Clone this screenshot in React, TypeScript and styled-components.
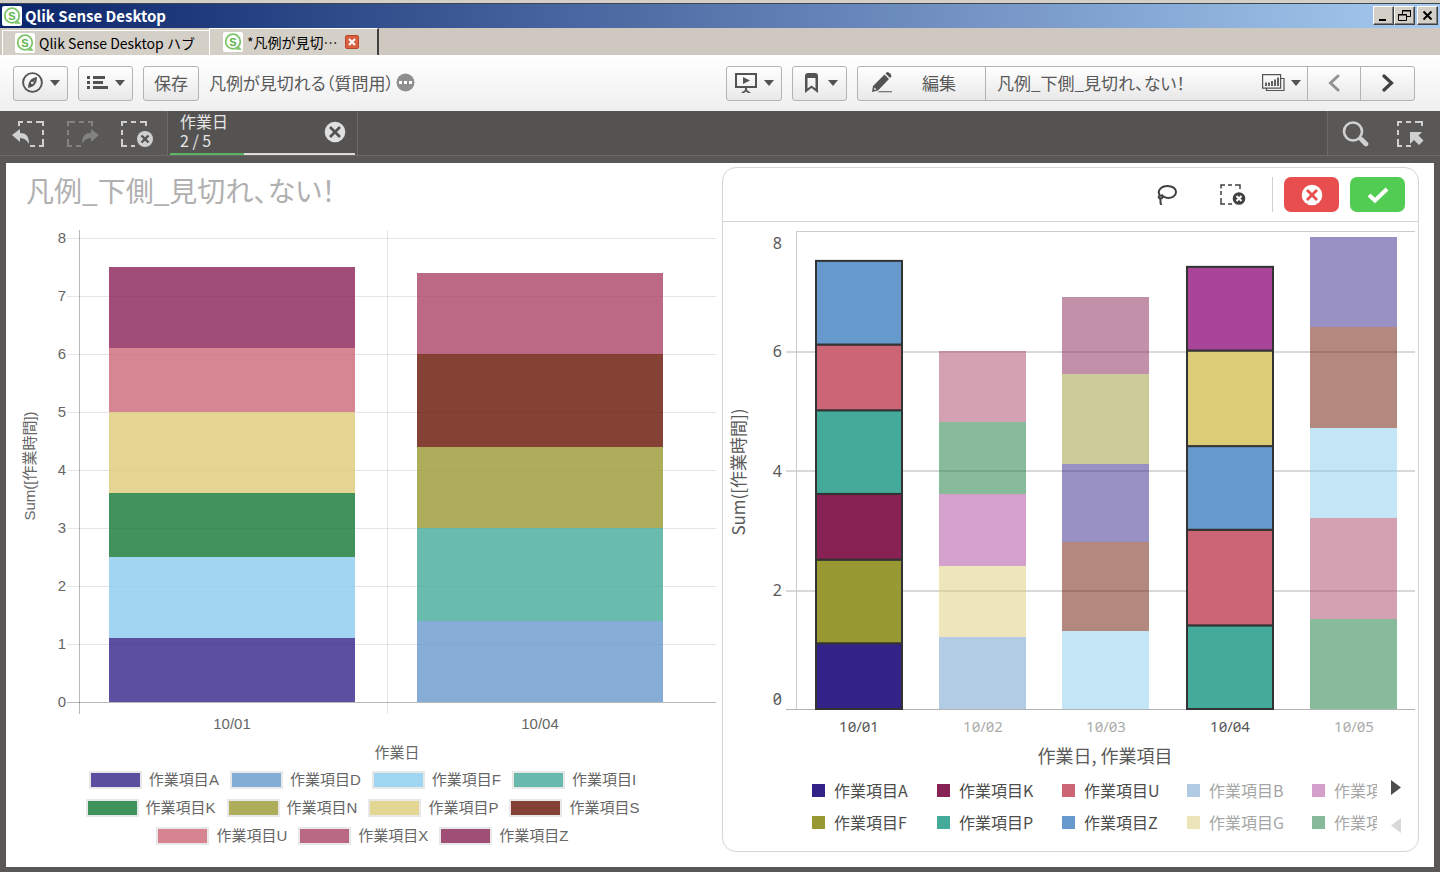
import React from 'react';
import styled, { createGlobalStyle, css } from 'styled-components';

const jp = '"Noto Sans CJK JP", "Noto Sans", sans-serif';
const mixed = '"Liberation Sans", "Noto Sans CJK JP", sans-serif';
const numeric = '"Noto Sans", "Noto Sans CJK JP", sans-serif';

const GlobalStyle = createGlobalStyle`
  * { box-sizing: border-box; }
  body {
    margin: 0;
    background: #595857;
    font-family: ${jp};
    color: #595959;
  }
  button { font: inherit; color: inherit; padding: 0; margin: 0; cursor: pointer; }
  h1, h2, p, ul { margin: 0; padding: 0; font-weight: 400; }
  ul { list-style: none; }
  svg { display: block; flex: none; }
`;

const palette = {
  indigo: '#332288',
  blue: '#6699cc',
  cyan: '#88ccee',
  teal: '#44aa99',
  green: '#117733',
  olive: '#999933',
  sand: '#ddcc77',
  brown: '#661100',
  rose: '#cc6677',
  raspberry: '#aa4466',
  wine: '#882255',
  purple: '#aa4499',
};

/* ---------- window frame ---------- */

const Page = styled.div`
  display: flex;
  flex-direction: column;
  min-height: 100vh;
`;

const TitleBar = styled.header`
  display: flex;
  align-items: center;
  gap: 3px;
  height: 28px;
  padding: 1px 2px 1px;
  border-top: 3px solid #d4d0c8;
  background: linear-gradient(90deg, #0a246a, #a6caf0);
  box-shadow: inset 0 1px 0 #3c4650;
`;

const WindowTitle = styled.h1`
  flex: 1;
  font-size: 15px;
  line-height: 20px;
  font-weight: 700;
  color: #fff;
`;

const WindowButtons = styled.div`
  display: flex;
`;

const WindowButton = styled.button<{ $apart?: boolean }>`
  display: grid;
  place-items: center;
  width: 21px;
  height: 19px;
  margin-left: ${(p) => (p.$apart ? 2 : 0)}px;
  background: #d4d0c8;
  color: #000;
  border: 1px solid;
  border-color: #fff #404040 #404040 #fff;
  box-shadow: inset -1px -1px 0 #808080;
`;

const TabBar = styled.div`
  display: flex;
  align-items: flex-end;
  height: 28px;
  padding-left: 2px;
  background: #cec8c1;
  border-bottom: 1px solid #fff;
`;

const Tab = styled.button<{ $active?: boolean }>`
  display: flex;
  align-items: center;
  gap: 4px;
  font-size: 14px;
  line-height: 20px;
  color: #000;
  background: #d4d0c8;
  border: 0 solid #fff;
  border-width: 1px 0 0 1px;
  ${(p) =>
    p.$active
      ? css`
          height: 27px;
          padding: 0 18px 0 13px;
          border-right: 2px solid #404040;
        `
      : css`
          height: 25px;
          padding: 0 14px 0 12px;
        `}
`;

const TabClose = styled.span`
  display: grid;
  place-items: center;
  width: 14px;
  height: 14px;
  margin-left: 4px;
  border-radius: 2px;
  background: #d9603f;
  border: 1px solid #b8442c;
`;

function AppLogo() {
  return (
    <svg width="20" height="20" viewBox="0 0 20 20" aria-hidden="true">
      <rect width="20" height="20" rx="2" fill="#fff" />
      <circle cx="10" cy="9.500" r="7.300" fill="none" stroke="#7cc46a" strokeWidth="1.800" />
      <path d="M14.500 14.500l2.500 2.500h-4" fill="none" stroke="#7cc46a" strokeWidth="1.600" />
      <text x="10" y="13.500" textAnchor="middle" fontFamily="Liberation Sans, sans-serif" fontSize="11" fontWeight="700" fill="#5cb548">
        S
      </text>
    </svg>
  );
}

/* ---------- toolbar ---------- */

const Toolbar = styled.nav`
  display: flex;
  align-items: center;
  gap: 10px;
  height: 55px;
  padding: 0 25px 0 13px;
  background: linear-gradient(#fff, #efefef);
  font-size: 17px;
  line-height: 24px;
`;

const ToolButton = styled.button<{ $width?: number }>`
  display: flex;
  align-items: center;
  justify-content: center;
  gap: 7px;
  width: ${(p) => p.$width ?? 55}px;
  height: 35px;
  padding-bottom: 2px;
  border: 1px solid #b3b3b3;
  border-radius: 3px;
  background: linear-gradient(#fff, #e8e8e8);
`;

const AppName = styled.p`
  display: flex;
  align-items: center;
  gap: 2px;
  flex: 1;
  min-width: 0;
  padding-bottom: 2px;
  white-space: nowrap;
  font-feature-settings: 'palt';
`;

const PlainButton = styled.button`
  display: grid;
  place-items: center;
  background: none;
  border: 0;
`;

const ButtonGroup = styled.div`
  display: flex;
  height: 35px;
  border: 1px solid #b3b3b3;
  border-radius: 3px;
  background: linear-gradient(#fff, #e8e8e8);
`;

const GroupButton = styled.button<{ $width: number; $faded?: boolean }>`
  display: flex;
  align-items: center;
  justify-content: center;
  width: ${(p) => p.$width}px;
  padding-bottom: 2px;
  background: none;
  border: 0;
  & + & { border-left: 1px solid #b3b3b3; }
  & > svg { opacity: ${(p) => (p.$faded ? 0.6 : 1)}; }
`;

const EditLabel = styled.span`
  flex: 1;
`;

const SheetLabel = styled.span`
  flex: 1;
  text-align: left;
  padding-left: 11px;
  font-feature-settings: 'palt';
`;

const IconSlot = styled.span<{ $before?: number; $after?: number }>`
  display: flex;
  align-items: center;
  gap: 6px;
  padding-left: ${(p) => p.$before ?? 0}px;
  padding-right: ${(p) => p.$after ?? 0}px;
`;

const Caret = () => (
  <svg width="10" height="6" viewBox="0 0 10 6" aria-hidden="true">
    <path d="M0 0h10l-5 6z" fill="#545352" />
  </svg>
);

/* ---------- selections bar ---------- */

const SelectionBar = styled.div`
  display: flex;
  height: 45px;
  background: #545352;
  border-bottom: 1px solid #6b6a69;
  color: #e6e6e6;
`;

const SelectionTools = styled.div<{ $side: 'left' | 'right' }>`
  display: flex;
  align-items: center;
  justify-content: space-between;
  background: #595857;
  ${(p) =>
    p.$side === 'left'
      ? css`
          width: 168px;
          padding: 2px 13px 0 12px;
          border-right: 1px solid #6b6a69;
        `
      : css`
          width: 113px;
          margin-left: auto;
          padding: 2px 16px 0 14px;
          border-left: 1px solid #6b6a69;
        `}
`;

const SelectionItem = styled.div`
  display: flex;
  align-items: center;
  justify-content: space-between;
  width: 190px;
  padding: 0 11px 2px 12px;
  border-right: 1px solid #6b6a69;
  background: linear-gradient(#5bb45f, #5bb45f) 2px 100% / 74px 2px no-repeat,
    linear-gradient(#dcdcdc, #dcdcdc) 2px 100% / 185px 2px no-repeat;
`;

const SelectionText = styled.p`
  font-size: 16px;
  line-height: 19px;
  padding-bottom: 3px;
`;

const SelectionCount = styled.span`
  display: block;
`;

/* ---------- sheet ---------- */

const Sheet = styled.main`
  display: grid;
  grid-template-columns: 716fr 697fr;
  align-items: start;
  margin: 7px 6px 6px;
  padding: 4px 15px 15px 0;
  background: #fff;
`;

const ChartPanel = styled.section``;

const PanelTitle = styled.h2`
  height: 57px;
  padding-left: 20px;
  font-size: 28px;
  line-height: 46px;
  color: #b0b0b0;
  font-feature-settings: 'palt';
`;

const Card = styled.section`
  border: 1px solid #d5d5d5;
  border-radius: 14px;
  overflow: hidden;
`;

const CardHeader = styled.div`
  display: flex;
  align-items: center;
  justify-content: flex-end;
  height: 54px;
  padding-right: 13px;
  border-bottom: 1px solid #d5d5d5;
`;

const HeaderTool = styled(PlainButton)`
  width: 66px;
  height: 35px;
`;

const Divider = styled.span`
  width: 1px;
  height: 35px;
  margin: 0 11px 0 6px;
  background: #d0d0d0;
`;

const ActionButton = styled.button<{ $tone: string }>`
  display: grid;
  place-items: center;
  width: 55px;
  height: 35px;
  border: 0;
  border-radius: 7px;
  background: ${(p) => p.$tone};
  & + & { margin-left: 11px; }
`;

const ChartSvg = styled.svg`
  width: 100%;
  height: auto;
`;

const WideLegend = styled.ul`
  display: flex;
  flex-wrap: wrap;
  justify-content: center;
  column-gap: 11px;
  padding: 1px 43px 0 40px;
  font-family: ${mixed};
  font-size: 15px;
  line-height: 28px;
  color: #666;
`;

const WideLegendItem = styled.li`
  display: flex;
  align-items: center;
  gap: 7px;
`;

const WideSwatch = styled.span<{ $color: string }>`
  width: 53px;
  height: 18px;
  border: 2px solid #e3e3e3;
  background: ${(p) => p.$color};
  opacity: 0.8;
`;

const PagedLegend = styled.div`
  display: flex;
  padding: 0 17px 13px 89px;
`;

const LegendColumns = styled.ul`
  flex: 1;
  min-width: 0;
  display: grid;
  grid-template-rows: 32px 32px;
  grid-auto-columns: 125px;
  grid-auto-flow: column;
  overflow: hidden;
  font-size: 16px;
  line-height: 32px;
  color: #4d4d4d;
`;

const SquareItem = styled.li<{ $faded: boolean }>`
  display: flex;
  align-items: center;
  gap: 9px;
  white-space: nowrap;
  opacity: ${(p) => (p.$faded ? 0.5 : 1)};
`;

const SquareSwatch = styled.span<{ $color: string }>`
  flex: none;
  width: 13px;
  height: 13px;
  background: ${(p) => p.$color};
`;

const Pager = styled.div`
  display: flex;
  flex-direction: column;
  justify-content: space-between;
  width: 24px;
  padding: 6px 0 5px 13px;
`;

/* ---------- data ---------- */

type Segment = [color: string, value: number];

const leftBars: { label: string; segments: Segment[] }[] = [
  {
    label: '10/01',
    segments: [
      [palette.indigo, 1.1], [palette.cyan, 1.4], [palette.green, 1.1],
      [palette.sand, 1.4], [palette.rose, 1.1], [palette.wine, 1.4],
    ],
  },
  {
    label: '10/04',
    segments: [
      [palette.blue, 1.4], [palette.teal, 1.6], [palette.olive, 1.4],
      [palette.brown, 1.6], [palette.raspberry, 1.4],
    ],
  },
];

const rightBars: { label: string; selected: boolean; segments: Segment[] }[] = [
  {
    label: '10/01', selected: true,
    segments: [
      [palette.indigo, 1.1], [palette.olive, 1.4], [palette.wine, 1.1],
      [palette.teal, 1.4], [palette.rose, 1.1], [palette.blue, 1.4],
    ],
  },
  {
    label: '10/02', selected: false,
    segments: [
      [palette.blue, 1.2], [palette.sand, 1.2], [palette.purple, 1.2],
      [palette.green, 1.2], [palette.raspberry, 1.2],
    ],
  },
  {
    label: '10/03', selected: false,
    segments: [
      [palette.cyan, 1.3], [palette.brown, 1.5], [palette.indigo, 1.3],
      [palette.olive, 1.5], [palette.wine, 1.3],
    ],
  },
  {
    label: '10/04', selected: true,
    segments: [
      [palette.teal, 1.4], [palette.rose, 1.6], [palette.blue, 1.4],
      [palette.sand, 1.6], [palette.purple, 1.4],
    ],
  },
  {
    label: '10/05', selected: false,
    segments: [
      [palette.green, 1.5], [palette.raspberry, 1.7], [palette.cyan, 1.5],
      [palette.brown, 1.7], [palette.indigo, 1.5],
    ],
  },
];

const leftLegend: [string, string][] = [
  ['A', palette.indigo], ['D', palette.blue], ['F', palette.cyan], ['I', palette.teal],
  ['K', palette.green], ['N', palette.olive], ['P', palette.sand], ['S', palette.brown],
  ['U', palette.rose], ['X', palette.raspberry], ['Z', palette.wine],
];

const rightLegend: [string, string, boolean][] = [
  ['A', palette.indigo, false], ['F', palette.olive, false],
  ['K', palette.wine, false], ['P', palette.teal, false],
  ['U', palette.rose, false], ['Z', palette.blue, false],
  ['B', palette.blue, true], ['G', palette.sand, true],
  ['L', palette.purple, true], ['Q', palette.green, true],
];

function stack(segments: Segment[]) {
  let base = 0;
  return segments.map(([color, value]) => {
    const from = base;
    base += value;
    return { color, from, to: base };
  });
}

/* ---------- charts ---------- */

function LeftChart() {
  const y = (v: number) => 478 - v * 58;
  const plot = { left: 73, right: 710, slot: 308, bar: 246 };
  return (
    <ChartSvg viewBox="0 0 716 541" role="img" aria-label="Sum([作業時間]) / 作業日" fontFamily={mixed} fontSize="15" fill="#666">
      {[0, 1, 2, 3, 4, 5, 6, 7, 8].map((v) => (
        <g key={v}>
          <rect x="61" y={y(v)} width={plot.right - 61} height="1" fill="#000" opacity={v === 0 ? 0.28 : 0.1} />
          <text x="60" y={y(v) + 5} textAnchor="end">{v}</text>
        </g>
      ))}
      <rect x={plot.left} y="6" width="1" height="484" fill="#000" opacity="0.28" />
      <rect x={plot.left + plot.slot} y="6" width="1" height="484" fill="#000" opacity="0.1" />
      {leftBars.map((bar, i) => {
        const x = plot.left + i * plot.slot + 30;
        return (
          <g key={bar.label}>
            {stack(bar.segments).map((s) => (
              <rect key={s.from} x={x} y={y(s.to)} width={plot.bar} height={y(s.from) - y(s.to)} fill={s.color} opacity="0.8" shapeRendering="crispEdges" />
            ))}
            <text x={x + plot.bar / 2} y="505" textAnchor="middle">{bar.label}</text>
          </g>
        );
      })}
      <text x="391" y="534" textAnchor="middle">作業日</text>
      <text transform="translate(29 242) rotate(-90)" textAnchor="middle">Sum([作業時間])</text>
    </ChartSvg>
  );
}

function RightChart() {
  const y = (v: number) => 487 - v * 59.75;
  return (
    <ChartSvg viewBox="0 0 695 552" role="img" aria-label="Sum([作業時間]) / 作業日, 作業項目" fontFamily={jp} fill="#595959">
      {[2, 4, 6].map((v) => (
        <rect key={v} x="63" y={Math.round(y(v))} width="629" height="2" fill="#d9d9d9" />
      ))}
      <rect x="73" y="9" width="619" height="1" fill="#ccc" />
      <rect x="73" y="9" width="1" height="479" fill="#ccc" />
      <g fontFamily={numeric} fontSize="16" textAnchor="end" style={{ fontFeatureSettings: "'zero'" }}>
        {[['8', 27], ['6', 135], ['4', 255], ['2', 374], ['0', 483]].map(([t, ty]) => (
          <text key={t} x="59" y={ty}>{t}</text>
        ))}
      </g>
      <rect x="63" y="487" width="629" height="1" fill="#b3b3b3" />
      {rightBars.map((bar, i) => {
        const x = 92 + Math.round(i * 123.7);
        return (
          <g key={bar.label}>
            {stack(bar.segments).map((s) => (
              <rect
                key={s.from}
                x={bar.selected ? x + 1 : x}
                y={y(s.to)}
                width={bar.selected ? 86 : 87}
                height={y(s.from) - y(s.to)}
                fill={s.color}
                fillOpacity={bar.selected ? 1 : 0.5}
                stroke={bar.selected ? '#333' : 'none'}
                strokeWidth="2"
                shapeRendering={bar.selected ? 'auto' : 'crispEdges'}
              />
            ))}
            <text
              x={x + 44}
              y="510"
              textAnchor="middle"
              fontFamily={numeric}
              fontSize="15"
              opacity={bar.selected ? 1 : 0.5}
              style={{ fontFeatureSettings: "'zero'" }}
            >
              {bar.label}
            </text>
          </g>
        );
      })}
      <text x="382" y="541" textAnchor="middle" fontSize="18">作業日, 作業項目</text>
      <text transform="translate(22 250) rotate(-90)" textAnchor="middle" fontSize="17">Sum([作業時間])</text>
    </ChartSvg>
  );
}

/* ---------- icons ---------- */

function StepBackIcon({ flip }: { flip?: boolean }) {
  return (
    <svg width="33" height="28" viewBox="0 0 33 28" fill="none" aria-hidden="true">
      <g transform={flip ? 'translate(33 0) scale(-1 1)' : undefined} opacity={flip ? 0.35 : 1} stroke="#d0d0d0" strokeWidth="2">
        <path d="M7 6V2h4M15 2h5M24 2h7v4M31 10v5M31 19v7h-4M23 26h-5" />
        <path d="M0 15l8-6v4c6 0 9 3 9 11-2-4-5-6-9-6v4z" fill="#d0d0d0" stroke="none" />
      </g>
    </svg>
  );
}

function ClearIcon() {
  return (
    <svg width="34" height="28" viewBox="0 0 34 28" fill="none" stroke="#d0d0d0" strokeWidth="2" aria-hidden="true">
      <path d="M2 6V2h5M11 2h5M20 2h6v4M2 10v5M2 19v7h5M11 26h4" />
      <circle cx="25" cy="19" r="8" fill="#d0d0d0" stroke="none" />
      <path d="M21.500 15.500l7 7M28.500 15.500l-7 7" stroke="#545352" strokeWidth="2.400" />
    </svg>
  );
}

const CrossDisc = ({ disc, cross }: { disc: string; cross: string }) => (
  <svg width="22" height="22" viewBox="0 0 22 22" aria-hidden="true">
    <circle cx="11" cy="11" r="10.300" fill={disc} />
    <path d="M6 6l10 10M16 6L6 16" stroke={cross} strokeWidth="2.800" />
  </svg>
);

/* ---------- page ---------- */

export default function App() {
  return (
    <Page>
      <GlobalStyle />
      <TitleBar>
        <AppLogo />
        <WindowTitle>Qlik Sense Desktop</WindowTitle>
        <WindowButtons>
          <WindowButton aria-label="最小化">
            <svg width="13" height="13" viewBox="0 0 13 13"><path d="M2 10h7v2H2z" /></svg>
          </WindowButton>
          <WindowButton aria-label="元に戻す">
            <svg width="13" height="13" viewBox="0 0 13 13" fill="none" stroke="#000">
              <path d="M4.500 5V1.500h8v6H9M4 2h9" />
              <path d="M0.500 5.500h8v6h-8zM0 6h9" />
            </svg>
          </WindowButton>
          <WindowButton aria-label="閉じる" $apart>
            <svg width="11" height="11" viewBox="0 0 11 11"><path d="M1.500 1.500l8 8M9.500 1.500l-8 8" stroke="#000" strokeWidth="2" /></svg>
          </WindowButton>
        </WindowButtons>
      </TitleBar>

      <TabBar role="tablist">
        <Tab role="tab" aria-selected={false}>
          <AppLogo />
          Qlik Sense Desktop ハブ
        </Tab>
        <Tab role="tab" aria-selected $active>
          <AppLogo />
          *凡例が見切…
          <TabClose>
            <svg width="8" height="8" viewBox="0 0 8 8"><path d="M1 1l6 6M7 1L1 7" stroke="#fff" strokeWidth="2" /></svg>
          </TabClose>
        </Tab>
      </TabBar>

      <Toolbar>
        <ToolButton aria-label="ナビゲーション">
          <svg width="21" height="21" viewBox="0 0 21 21" fill="none" stroke="#545352" aria-hidden="true">
            <circle cx="10.500" cy="10.500" r="9.400" strokeWidth="1.900" />
            <path d="M14.800 4.800c.5 4.200-1.300 7.800-3.500 9.200-1.600 1-3.600 1.300-5 2.200-.5-4.200 1.300-7.800 3.500-9.200 1.600-1 3.600-1.300 5-2.200z" fill="#545352" stroke="none" />
            <path d="M12.500 7.500c0 2-.8 4-2 5.200z" fill="#fff" stroke="none" />
            <circle cx="10" cy="10.800" r="1.100" fill="#fff" stroke="none" />
          </svg>
          <Caret />
        </ToolButton>
        <ToolButton aria-label="メニュー">
          <svg width="21" height="14" viewBox="0 0 21 14" fill="#545352" aria-hidden="true">
            <path d="M0 0h3v3H0zM0 5h3v3H0zM0 10h3v3H0zM6 0h12v3H6zM6 5h10v3H6zM6 10h15v3H6z" />
          </svg>
          <Caret />
        </ToolButton>
        <ToolButton $width={56}>保存</ToolButton>
        <AppName>
          凡例が見切れる（質問用）
          <PlainButton aria-label="詳細">
            <svg width="19" height="19" viewBox="0 0 19 19" fill="#fff">
              <circle cx="9.500" cy="9.500" r="9" fill="#8f8f8f" />
              <path d="M3 8h3v3H3zM8 8h3v3H8zM13 8h3v3h-3z" />
            </svg>
          </PlainButton>
        </AppName>
        <ToolButton $width={56} aria-label="ストーリー">
          <svg width="22" height="20" viewBox="0 0 22 20" fill="none" stroke="#545352" aria-hidden="true">
            <path d="M1 1h20v13H1z" strokeWidth="2" />
            <path d="M8 4l7 3.500L8 11zM10 14h2v3l4 3h-3l-2-1.500L9 20H6l4-3z" fill="#545352" stroke="none" />
          </svg>
          <Caret />
        </ToolButton>
        <ToolButton aria-label="ブックマーク">
          <svg width="20" height="20" viewBox="0 0 20 20" aria-hidden="true">
            <path d="M4 3q0-3 3-3h7q3 0 3 3v17l-6.500-5L4 20zM6.500 5v10.500l4-3 4 3V5z" fill="#545352" fillRule="evenodd" />
          </svg>
          <Caret />
        </ToolButton>
        <ButtonGroup>
          <GroupButton $width={127}>
            <IconSlot $before={14}>
              <svg width="21" height="21" viewBox="0 0 21 21" fill="#545352" aria-hidden="true">
                <path d="M1 14L12.500 2.500l4.500 4.500L6 18.500 0 20zM2.500 15.500L2 18l2.500-.5zM13.500 1.500L15 0q4 .5 4.500 4.500L18 6z" fillRule="evenodd" />
                <path d="M7 19.200h13v1H6z" />
              </svg>
            </IconSlot>
            <EditLabel>編集</EditLabel>
          </GroupButton>
          <GroupButton $width={322}>
            <SheetLabel>凡例_下側_見切れ、ない！</SheetLabel>
            <IconSlot $after={6}>
              <svg width="23" height="18" viewBox="0 0 23 18" fill="none" stroke="#545352" aria-hidden="true">
                <path d="M0.600 0.600h18v13.500h-18zM19 4.500h3v12H4.500v-2" strokeWidth="1.200" />
                <path d="M4 12V8.500M7 12V8.500M10 12V7M13 12V5.500M16 12V3.500" strokeWidth="1.800" />
              </svg>
              <Caret />
            </IconSlot>
          </GroupButton>
          <GroupButton $width={53} $faded aria-label="前のシート">
            <svg width="14" height="18" viewBox="0 0 14 18"><path d="M11 2L3.500 9l7.500 7" fill="none" stroke="#545352" strokeWidth="3" strokeLinecap="round" /></svg>
          </GroupButton>
          <GroupButton $width={54} aria-label="次のシート">
            <svg width="14" height="18" viewBox="0 0 14 18"><path d="M3 2l7.500 7L3 16" fill="none" stroke="#404040" strokeWidth="3.200" strokeLinecap="round" /></svg>
          </GroupButton>
        </ButtonGroup>
      </Toolbar>

      <SelectionBar>
        <SelectionTools $side="left">
          <PlainButton aria-label="元に戻す"><StepBackIcon /></PlainButton>
          <PlainButton aria-label="やり直し"><StepBackIcon flip /></PlainButton>
          <PlainButton aria-label="選択をすべてクリア"><ClearIcon /></PlainButton>
        </SelectionTools>
        <SelectionItem>
          <SelectionText>
            作業日
            <SelectionCount>2 / 5</SelectionCount>
          </SelectionText>
          <PlainButton aria-label="選択をクリア"><CrossDisc disc="#e0e0e0" cross="#545352" /></PlainButton>
        </SelectionItem>
        <SelectionTools $side="right">
          <PlainButton aria-label="検索">
            <svg width="27" height="26" viewBox="0 0 27 26" fill="none" stroke="#d0d0d0" aria-hidden="true">
              <circle cx="11" cy="10.500" r="9" strokeWidth="2.600" />
              <path d="M17 16.500l2 2" strokeWidth="3" />
              <path d="M19.500 18.500l4.500 4.500" strokeWidth="4.600" strokeLinecap="round" />
            </svg>
          </PlainButton>
          <PlainButton aria-label="選択ツール">
            <svg width="27" height="27" viewBox="0 0 27 27" fill="none" stroke="#d0d0d0" strokeWidth="2" aria-hidden="true">
              <path d="M1 5V1h4M9 1h5M18 1h7v4M1 9v5M1 18v7h4M9 25h5" />
              <path d="M13 11h12l-3.500 3.500 5 5-4.500 4.500-5-5-4 4z" fill="#d0d0d0" stroke="none" />
            </svg>
          </PlainButton>
        </SelectionTools>
      </SelectionBar>

      <Sheet>
        <ChartPanel>
          <PanelTitle>凡例_下側_見切れ、ない！</PanelTitle>
          <LeftChart />
          <WideLegend>
            {leftLegend.map(([letter, color]) => (
              <WideLegendItem key={letter}>
                <WideSwatch $color={color} />
                作業項目{letter}
              </WideLegendItem>
            ))}
          </WideLegend>
        </ChartPanel>

        <Card>
          <CardHeader>
            <HeaderTool aria-label="投げ縄選択">
              <svg width="20" height="20" viewBox="0 0 20 20" fill="none" stroke="#404040" strokeWidth="2" aria-hidden="true">
                <path d="M3 10.500C-.5 6 4 1 10.500 1c5 0 8.500 2.500 8.500 6 0 4-4 6-8 6-3.500 0-5-2.500-8-2.500-2 0-1.500 3 .5 3 2.500 0 3-3 1-3.500" />
                <path d="M2.500 13c2.500 2-.5 4 2 7" />
              </svg>
            </HeaderTool>
            <HeaderTool aria-label="選択をクリア">
              <svg width="26" height="22" viewBox="0 0 26 22" fill="none" stroke="#404040" strokeWidth="1.500" aria-hidden="true">
                <path d="M1 4.500V1h4M8 1h4M15 1h5v4M1 7v4M1 14v6h4M8 20h4" />
                <circle cx="19" cy="14.500" r="6.300" fill="#404040" stroke="none" />
                <path d="M16.500 12l5 5M21.500 12l-5 5" stroke="#fff" strokeWidth="2" />
              </svg>
            </HeaderTool>
            <Divider />
            <ActionButton $tone="#e84e4e" aria-label="選択をキャンセル"><CrossDisc disc="#fff" cross="#e84e4e" /></ActionButton>
            <ActionButton $tone="#52cc52" aria-label="選択を確定">
              <svg width="22" height="16" viewBox="0 0 22 16"><path d="M2 8l6 5.500L20 2" fill="none" stroke="#fff" strokeWidth="4" /></svg>
            </ActionButton>
          </CardHeader>
          <RightChart />
          <PagedLegend>
            <LegendColumns>
              {rightLegend.map(([letter, color, faded]) => (
                <SquareItem key={letter} $faded={faded}>
                  <SquareSwatch $color={color} />
                  作業項目{letter}
                </SquareItem>
              ))}
            </LegendColumns>
            <Pager>
              <PlainButton aria-label="次の凡例">
                <svg width="10" height="15" viewBox="0 0 10 15"><path d="M0 0v15l10-7.500z" fill="#4d4d4d" /></svg>
              </PlainButton>
              <PlainButton aria-label="前の凡例">
                <svg width="10" height="15" viewBox="0 0 10 15"><path d="M10 0v15L0 7.500z" fill="#d9d9d9" /></svg>
              </PlainButton>
            </Pager>
          </PagedLegend>
        </Card>
      </Sheet>
    </Page>
  );
}
